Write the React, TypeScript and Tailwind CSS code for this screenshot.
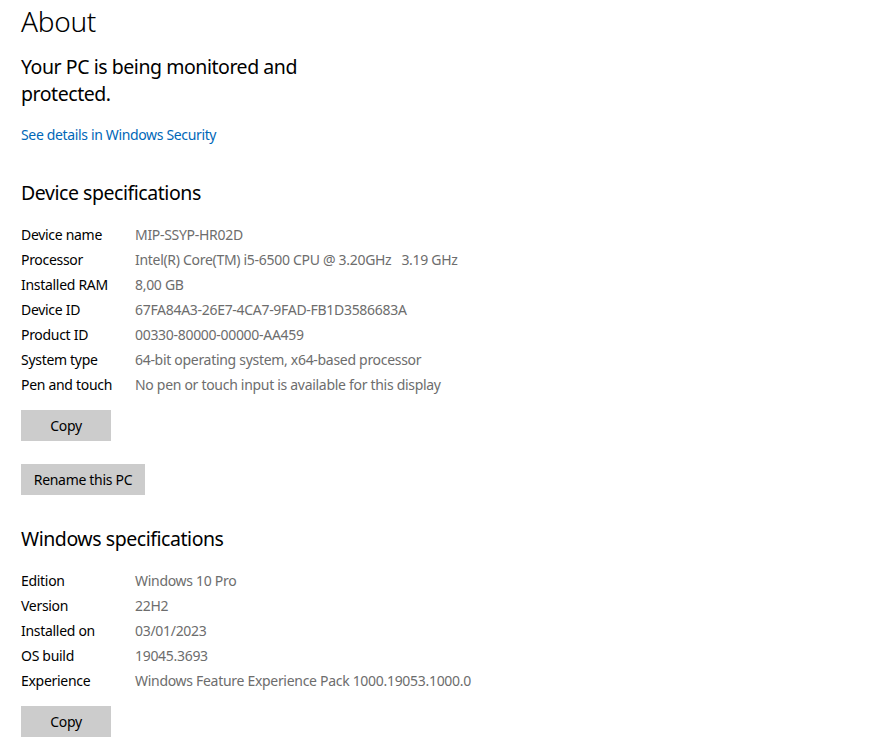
const font = { fontFamily: '"Noto Sans", "Open Sans", sans-serif' };

const deviceSpecs: [string, string][] = [
  ["Device name", "MIP-SSYP-HR02D"],
  ["Processor", "Intel(R) Core(TM) i5-6500 CPU @ 3.20GHz   3.19 GHz"],
  ["Installed RAM", "8,00 GB"],
  ["Device ID", "67FA84A3-26E7-4CA7-9FAD-FB1D3586683A"],
  ["Product ID", "00330-80000-00000-AA459"],
  ["System type", "64-bit operating system, x64-based processor"],
  ["Pen and touch", "No pen or touch input is available for this display"],
];

const windowsSpecs: [string, string][] = [
  ["Edition", "Windows 10 Pro"],
  ["Version", "22H2"],
  ["Installed on", "03/01/2023"],
  ["OS build", "19045.3693"],
  ["Experience", "Windows Feature Experience Pack 1000.19053.1000.0"],
];

function SpecTable({ rows }: { rows: [string, string][] }) {
  return (
    <div className="flex flex-col">
      {rows.map(([label, value]) => (
        <div key={label} className="flex h-[25px] items-center text-[14px] tracking-[-0.3px]">
          <span className="w-[114px] shrink-0 text-black">{label}</span>
          <span className="whitespace-pre text-[#6d6d6d]">{value}</span>
        </div>
      ))}
    </div>
  );
}

function GrayButton({ children, className }: { children: React.ReactNode; className: string }) {
  return (
    <button
      type="button"
      className={`flex h-[31px] items-center justify-center bg-[#cccccc] text-[14px] tracking-[-0.3px] text-black ${className}`}
    >
      {children}
    </button>
  );
}

export default function App() {
  return (
    <div className="min-h-[743px] bg-white pl-[21px]" style={font}>
      <h1 className="pt-px text-[28px] font-light leading-[40px] tracking-[-0.3px] text-black">About</h1>
      <p className="mt-[12px] w-[300px] text-[19.5px] leading-[27px] tracking-[-0.45px] text-black">
        Your PC is being monitored and protected.
      </p>
      <a href="#" className="mt-[18px] block text-[14px] leading-[20px] tracking-[-0.35px] text-[#0067b8]">
        See details in Windows Security
      </a>

      <h2 className="mt-[34px] text-[19.5px] leading-[28px] tracking-[-0.45px] text-black">Device specifications</h2>
      <div className="mt-[15px]">
        <SpecTable rows={deviceSpecs} />
      </div>
      <GrayButton className="mt-[13px] w-[90px]">Copy</GrayButton>
      <GrayButton className="mt-[23px] w-[124px]">Rename this PC</GrayButton>

      <h2 className="mt-[30px] text-[19.5px] leading-[28px] tracking-[-0.45px] text-black">Windows specifications</h2>
      <div className="mt-[15px]">
        <SpecTable rows={windowsSpecs} />
      </div>
      <GrayButton className="mt-[13px] w-[90px]">Copy</GrayButton>
    </div>
  );
}
